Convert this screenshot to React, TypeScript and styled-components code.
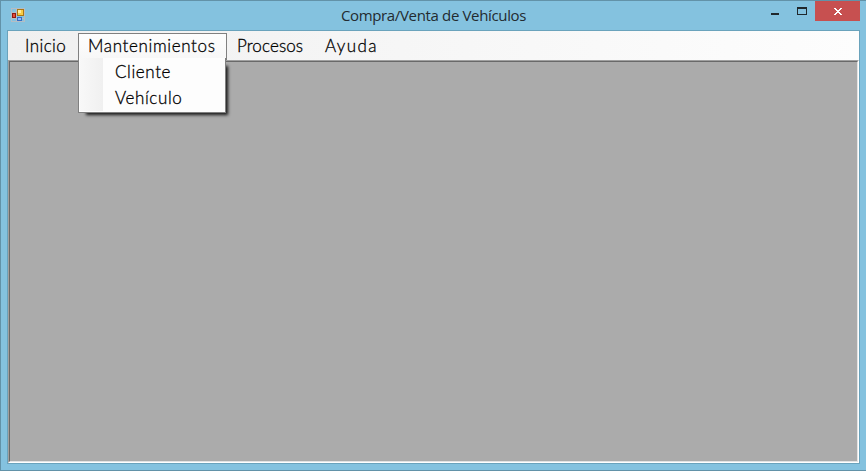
import React from "react";
import styled, { createGlobalStyle } from "styled-components";

const GlobalStyle = createGlobalStyle`
  * { box-sizing: border-box; }
  html, body { margin: 0; padding: 0; }
  body { overflow: hidden; }
`;

const Window = styled.div`
  display: flex;
  flex-direction: column;
  width: 866px;
  height: 471px;
  background: #84c2df;
  border: 1px solid #6292a8;
  border-right: 0;
  padding: 0 6px 6px;
`;

const TitleBar = styled.header`
  display: grid;
  grid-template-columns: 180px 1fr 180px;
  height: 29px;
  flex: none;
`;

const AppIcon = styled.svg`
  display: block;
  margin: 7px 0 0 4px;
`;

const Title = styled.h1<{ $spacing: number }>`
  margin: 0;
  padding-top: 3px;
  text-align: center;
  white-space: nowrap;
  font: 400 15px/22px "Open Sans", "Noto Sans", sans-serif;
  letter-spacing: ${(p) => p.$spacing}px;
  color: #232b30;
`;

const Controls = styled.div`
  display: flex;
  justify-content: flex-end;
  height: 20px;
`;

const ControlButton = styled.button<{ $width: number; $close?: boolean }>`
  width: ${(p) => p.$width}px;
  height: 20px;
  padding: 0;
  border: 0;
  background: ${(p) => (p.$close ? "#c75050" : "transparent")};
  svg { display: block; }
`;

const Client = styled.div`
  display: flex;
  flex-direction: column;
  flex: 1;
  width: 853px;
  border: 1px solid #6aa3bc;
  background: #fff;
`;

const MenuBar = styled.nav`
  display: flex;
  height: 29px;
  flex: none;
  padding: 2px 0 0 7px;
  background: linear-gradient(90deg, #f0f0f0, #fdfdfd);
`;

const MenuSlot = styled.div<{ $width: number }>`
  position: relative;
  width: ${(p) => p.$width}px;
  height: 27px;
`;

const MenuItem = styled.div<{ $open?: boolean; $spacing: number }>`
  height: 27px;
  padding-left: 9px;
  border: 1px solid ${(p) => (p.$open ? "#808080" : "transparent")};
  border-bottom: 0;
  background: ${(p) => (p.$open ? "linear-gradient(#fdfdfd, #f7f7f7)" : "transparent")};
  font: 300 17px/24px Lato, sans-serif;
  letter-spacing: ${(p) => p.$spacing}px;
  -webkit-text-stroke: 0.3px #000;
  white-space: nowrap;
  color: #000;
`;

const Dropdown = styled.div`
  position: absolute;
  z-index: 2;
  top: 25px;
  left: 0;
  width: 148px;
  height: 55px;
  padding: 1px 0 0;
  border: 1px solid #808080;
  border-top: 0;
  background: linear-gradient(90deg, #f8f8f8, #f0f0f0) 1px 0 / 23px 53px no-repeat #fdfdfd;
  box-shadow: 5px 5px 3px -3px rgba(0, 0, 0, 0.85);
  clip-path: inset(0 -6px -6px 0);
`;

const DropdownItem = styled.div<{ $spacing: number }>`
  height: 26px;
  padding-left: 36px;
  font: 300 17px/26px Lato, sans-serif;
  letter-spacing: ${(p) => p.$spacing}px;
  -webkit-text-stroke: 0.3px #000;
  white-space: nowrap;
  color: #000;
`;

const Workspace = styled.main`
  flex: 1;
  border: 1px solid;
  border-color: #a0a0a0 #fff #fff #a0a0a0;
`;

const WorkspaceInner = styled.div`
  height: 100%;
  border: 1px solid;
  border-color: #696969 #e3e3e3 #e3e3e3 #696969;
  background: #ababab;
`;

const menus = [
  { label: "Inicio", width: 63, spacing: 0.4 },
  { label: "Mantenimientos", width: 149, spacing: 0.65, open: true },
  { label: "Procesos", width: 88, spacing: 0.1 },
  { label: "Ayuda", width: 74, spacing: 1.4 },
];

const entries = [
  { label: "Cliente", spacing: 0.6 },
  { label: "Vehículo", spacing: 0.6 },
];

function FormIcon() {
  return (
    <AppIcon width="14" height="14" viewBox="0 0 14 14" shapeRendering="crispEdges">
      <path d="M.5 .5h13v13H.5zM5.5 .5v13M.5 4.5h5M.5 10.5h13" fill="none" stroke="#b5bdc4" />
      <rect x="6" y="1" width="7" height="7" fill="#ac7612" />
      <rect x="7" y="2" width="5" height="5" fill="#f7cc45" />
      <rect x="7" y="2" width="3" height="3" fill="#ffeb9b" />
      <rect x="1" y="5" width="4" height="5" fill="#8e1913" />
      <rect x="2" y="6" width="2" height="3" fill="#e64b37" />
      <rect x="6" y="9" width="5" height="4" fill="#376dc5" />
      <rect x="7" y="10" width="3" height="2" fill="#8fbcff" />
    </AppIcon>
  );
}

export default function App() {
  return (
    <>
      <GlobalStyle />
      <Window>
        <TitleBar>
          <FormIcon />
          <Title $spacing={-0.35}>Compra/Venta de Vehículos</Title>
          <Controls>
            <ControlButton $width={27} aria-label="Minimizar">
              <svg width="27" height="20" shapeRendering="crispEdges">
                <rect x="9" y="12" width="8" height="2" fill="#20282c" />
              </svg>
            </ControlButton>
            <ControlButton $width={26} aria-label="Maximizar">
              <svg width="26" height="20" shapeRendering="crispEdges">
                <path d="M8 6h10v8H8zM9 8v5h8V8z" fill="#20282c" fillRule="evenodd" />
              </svg>
            </ControlButton>
            <ControlButton $width={45} $close aria-label="Cerrar">
              <svg width="45" height="20" shapeRendering="crispEdges">
                <path
                  d="M19 7h2v1h1v1h2V8h1V7h2v1h-1v1h-1v1h-1v1h1v1h1v1h1v1h-2v-1h-1v-1h-2v1h-1v1h-2v-1h1v-1h1v-1h1v-1h-1V9h-1V8h-1z"
                  fill="#fff"
                />
              </svg>
            </ControlButton>
          </Controls>
        </TitleBar>
        <Client>
          <MenuBar>
            {menus.map((m) => (
              <MenuSlot key={m.label} $width={m.width}>
                <MenuItem $open={m.open} $spacing={m.spacing}>{m.label}</MenuItem>
                {m.open && (
                  <Dropdown>
                    {entries.map((e) => (
                      <DropdownItem key={e.label} $spacing={e.spacing}>{e.label}</DropdownItem>
                    ))}
                  </Dropdown>
                )}
              </MenuSlot>
            ))}
          </MenuBar>
          <Workspace>
            <WorkspaceInner />
          </Workspace>
        </Client>
      </Window>
    </>
  );
}
